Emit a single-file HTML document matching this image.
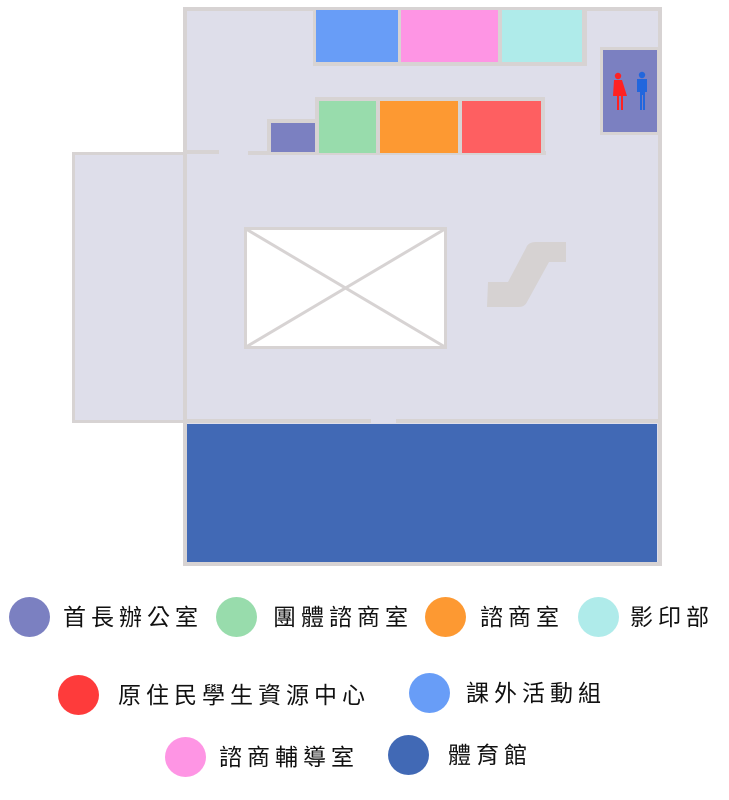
<!DOCTYPE html>
<html><head><meta charset="utf-8"><style>
body{margin:0;width:729px;height:800px;background:#fff;position:relative;overflow:hidden;font-family:"Liberation Sans","Noto Sans CJK TC",sans-serif}
.a{position:absolute;box-sizing:border-box}
.w{position:absolute;background:#d7d3d3}
.c{position:absolute;width:41px;height:40px;border-radius:50%}
.t{position:absolute;font-size:23px;letter-spacing:5px;color:#111;line-height:26px;white-space:nowrap;font-weight:400}
</style></head><body>
<div class="a" style="left:72px;top:152px;width:116px;height:271px;background:#dedeea;border:3px solid #d7d3d3;border-right:none"></div>
<div class="a" style="left:183px;top:7px;width:479px;height:559px;background:#dedeea;border:4px solid #d7d3d3"></div>
<div class="w" style="left:183px;top:150px;width:36px;height:4px"></div>
<div class="w" style="left:248px;top:151px;width:298px;height:4px"></div>
<div class="w" style="left:183px;top:7px;width:4px;height:255px"></div>
<div class="w" style="left:183px;top:288px;width:4px;height:135px"></div>
<div class="w" style="left:183px;top:419px;width:188px;height:4px"></div>
<div class="w" style="left:396px;top:419px;width:265px;height:4px"></div>
<div class="a" style="left:313px;top:7px;width:274px;height:59px;background:#d7d3d3"></div>
<div class="a" style="left:316px;top:10px;width:82px;height:52px;background:#689df7"></div>
<div class="a" style="left:401px;top:10px;width:97px;height:52px;background:#fe95e4"></div>
<div class="a" style="left:502px;top:10px;width:80px;height:52px;background:#afebea"></div>
<div class="a" style="left:315px;top:97px;width:230px;height:58px;background:#d7d3d3"></div>
<div class="a" style="left:267px;top:119px;width:52px;height:36px;background:#d7d3d3"></div>
<div class="a" style="left:271px;top:123px;width:44px;height:29px;background:#7b80c1"></div>
<div class="a" style="left:319px;top:101px;width:57px;height:52px;background:#98dcac"></div>
<div class="a" style="left:380px;top:101px;width:78px;height:52px;background:#fd9932"></div>
<div class="a" style="left:462px;top:101px;width:79px;height:52px;background:#fe5f61"></div>
<div class="a" style="left:600px;top:47px;width:60px;height:88px;background:#7b80c1;border:3px solid #d7d3d3"></div>
<svg class="a" style="left:605px;top:70px" width="50" height="42" viewBox="0 0 50 42">
<circle cx="13" cy="6" r="3.2" fill="#f22"/><path d="M9 10h8l5 16h-4v14h-2V26h-2v14h-2V26H8z" fill="#f22"/>
<circle cx="37" cy="5" r="3.2" fill="#2266dd"/><path d="M32 9h10v13h-2V40h-2V25h-1v15h-2V22h-3z" fill="#2266dd"/>
</svg>
<svg class="a" style="left:243px;top:226px" width="205" height="124" viewBox="0 0 205 124">
<rect x="2.5" y="2.5" width="200" height="119" fill="#fff" stroke="#d7d3d3" stroke-width="3"/>
<path d="M3 3L202 121M202 3L3 121" stroke="#d7d3d3" stroke-width="3"/>
</svg>
<svg class="a" style="left:484px;top:240px" width="90" height="80" viewBox="0 0 90 80">
<path d="M4 42h20l18-34q2-6 10-6h30v20H65l-22 40q-2 5-9 5H3z" fill="#d6d2d2"/>
</svg>
<div class="a" style="left:187px;top:424px;width:470px;height:138px;background:#4169b5"></div>
<div class="c" style="left:9px;top:597px;background:#7b80c1"></div><div class="t" style="left:63px;top:604px">首長辦公室</div>
<div class="c" style="left:216px;top:597px;background:#98dcac"></div><div class="t" style="left:273px;top:604px">團體諮商室</div>
<div class="c" style="left:425px;top:597px;background:#fd9932"></div><div class="t" style="left:480px;top:604px">諮商室</div>
<div class="c" style="left:578px;top:597px;background:#afebea"></div><div class="t" style="left:630px;top:604px">影印部</div>
<div class="c" style="left:58px;top:675px;background:#fe3b3b"></div><div class="t" style="left:118px;top:682px">原住民學生資源中心</div>
<div class="c" style="left:409px;top:673px;background:#689df7"></div><div class="t" style="left:466px;top:680px">課外活動組</div>
<div class="c" style="left:165px;top:737px;background:#fe95e4"></div><div class="t" style="left:219px;top:744px">諮商輔導室</div>
<div class="c" style="left:388px;top:735px;background:#4169b5"></div><div class="t" style="left:448px;top:742px">體育館</div>
</body></html>
